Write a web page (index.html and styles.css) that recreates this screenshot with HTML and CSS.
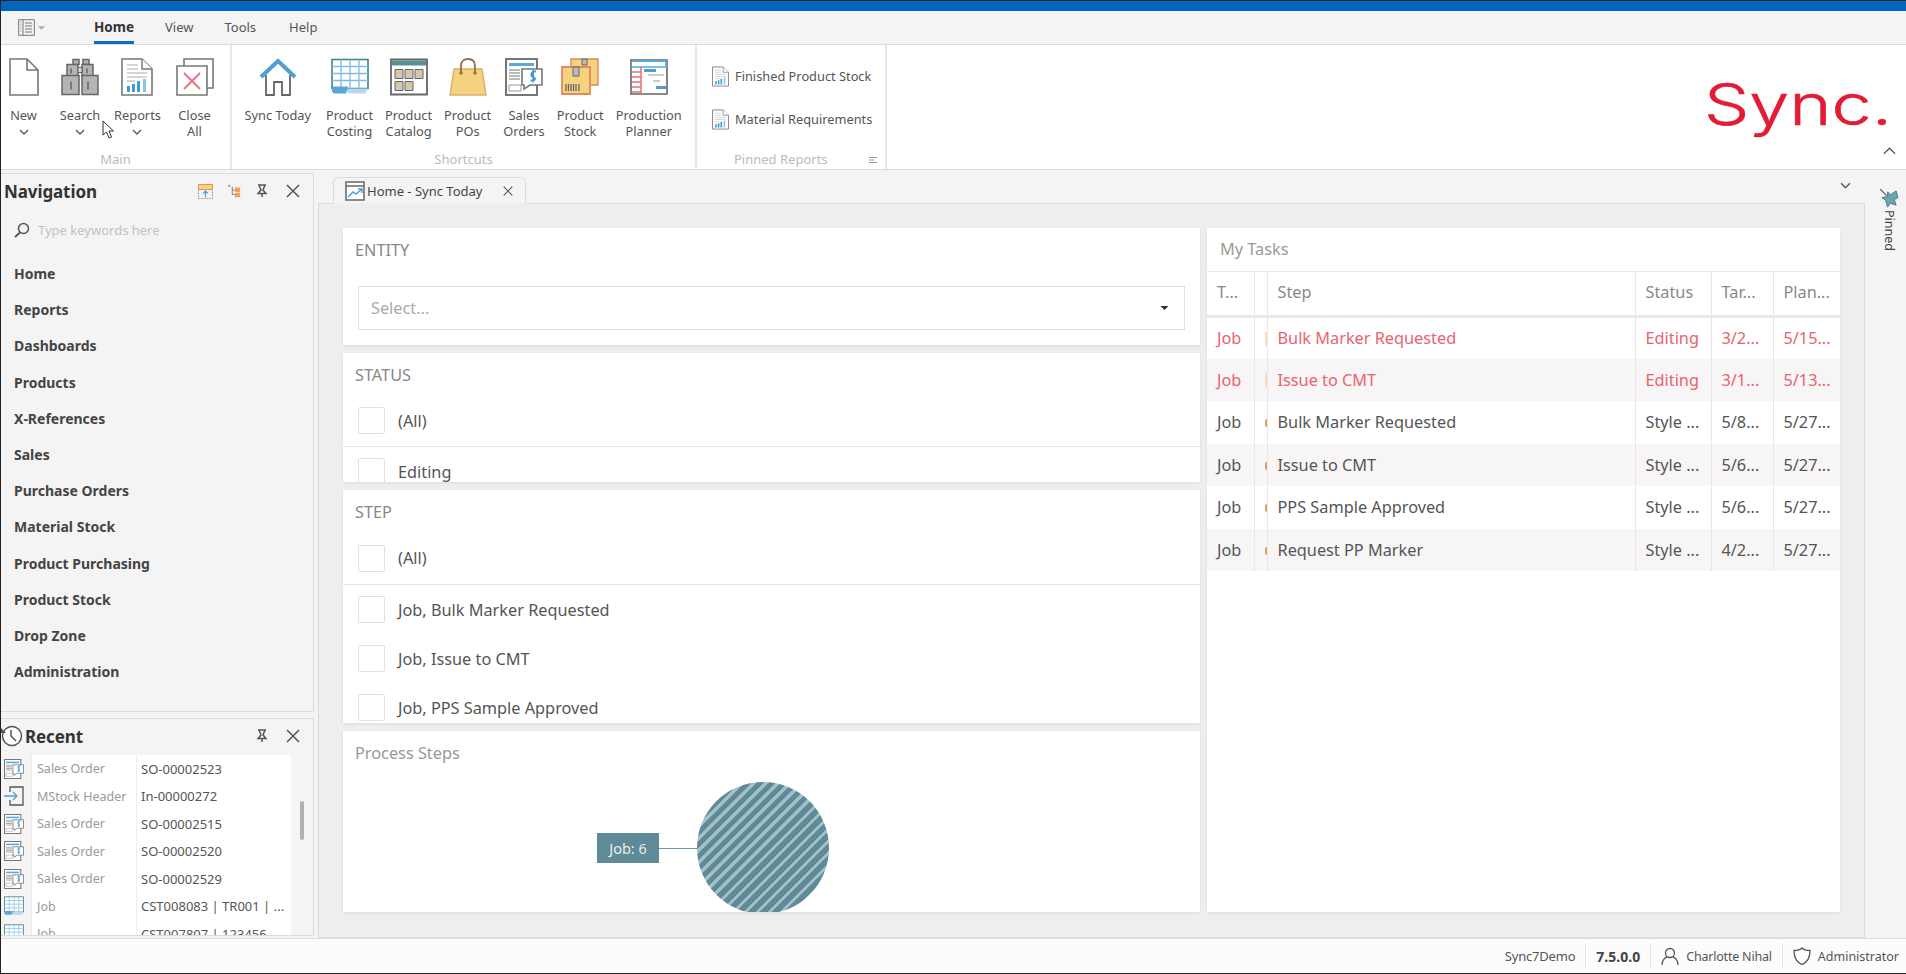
FILE: index.html
```html
<!DOCTYPE html>
<html lang="en">
<head>
<meta charset="utf-8">
<title>Sync - Home</title>
<link rel="stylesheet" href="styles.css">
</head>
<body>
<svg class="sprite" xmlns="http://www.w3.org/2000/svg">
  <symbol id="i-report" viewBox="0 0 32 38">
    <path d="M1 1H21L31 11V37H1Z" fill="#fff" stroke="#777" stroke-width="1.6"/><path d="M21 1V11H31" fill="#fff" stroke="#777" stroke-width="1.4"/>
    <path d="M6 7H17M6 11H17M6 15H26M6 19H26M6 23H14" stroke="#c8c8c8" stroke-width="1.4"/>
    <path d="M6 28h3v6H6zM11 26h3v8h-3zM16 23h3v11h-3z" fill="#3f9bd6"/><path d="M22 21h3v13h-3z" fill="#8bc2e6"/>
  </symbol>
  <symbol id="i-sales" viewBox="0 0 38 38">
    <path d="M1 1H32V37H1Z" fill="#fff" stroke="#777" stroke-width="2"/>
    <path d="M4 5H29V8H4Z" fill="#58aadd"/><path d="M4 12H15M4 15H15M4 18H15M4 21H15" stroke="#777" stroke-width="1.2"/>
    <path d="M4 27H16V33H4Z" fill="#fff" stroke="#999"/>
    <path d="M19 11H37V27H25L19 31V27H17V11Z" fill="#fff" stroke="#777" stroke-width="1.6"/>
    <path d="M31 13.500C26 13 25 18 28 19S31 23 25.500 22.500M28.200 12V24.500" fill="none" stroke="#3f9bd6" stroke-width="1.800"/>
  </symbol>
  <symbol id="i-grid" viewBox="0 0 38 37">
    <path d="M1 1H37V30H1Z" fill="#fff" stroke="#3f7f8c" stroke-width="1.6"/>
    <path d="M1 8H37M1 15H37M1 22H37M10 1V30M19 1V30M28 1V30" stroke="#7fbbe2" stroke-width="1.3"/>
    <path d="M1 30H37L34 35H18L16 33H2Z" fill="#b7d8ef"/><path d="M1 28H17L15 35H3L1 33Z" fill="#5aa6d8"/>
  </symbol>
  <symbol id="i-pin" viewBox="0 0 14 14">
    <path d="M3 1H11M4 1L6 6 3 9.500H11L8 6 10 1M7 9.500V13" fill="none" stroke="#555" stroke-width="1.500"/>
  </symbol>
  <symbol id="i-close" viewBox="0 0 14 14">
    <path d="M1 1L13 13M13 1L1 13" stroke="#555" stroke-width="1.500"/>
  </symbol>
  <symbol id="i-chev" viewBox="0 0 10 6">
    <path d="M1 1L5 5 9 1" fill="none" stroke="#555" stroke-width="1.300"/>
  </symbol>
</svg>

<div class="app">
  <div class="titlebar"></div>

  <div class="menubar">
    <div class="appmenu">
      <svg class="appmenu-icon" viewBox="0 0 17 17"><path d="M.7.7H16.300V16.300H.7Z" fill="#f4f4f4" stroke="#777"/><path d="M5 .7V16.300" stroke="#777"/><path d="M7 4H14M7 7H14M7 10H14M7 13H14" stroke="#777"/><path d="M2 3H3.500M2 6H3.500M2 9H3.500M2 12H3.500" stroke="#aaa"/></svg>
      <svg class="appmenu-caret" viewBox="0 0 8 4"><path d="M0 0H8L4 4Z" fill="#aaa"/></svg>
    </div>
    <nav class="menutabs">
      <span class="menutab menutab-on">Home</span>
      <span class="menutab">View</span>
      <span class="menutab">Tools</span>
      <span class="menutab menutab-help">Help</span>
    </nav>
  </div>

  <div class="ribbon">
    <section class="rgroup rgroup-main">
      <div class="rbtns rbtns-main">
        <div class="rbtn">
          <svg class="ricon ricon-new" viewBox="0 0 30 38"><path d="M1 1H18L29 12V37H1Z" fill="#fff" stroke="#777" stroke-width="1.600"/><path d="M18 1V12H29" fill="none" stroke="#777" stroke-width="1.600"/></svg>
          <span class="rlabel">New</span><svg class="rchev" viewBox="0 0 10 6"><use href="#i-chev"/></svg>
        </div>
        <div class="rbtn">
          <svg class="ricon" viewBox="0 0 38 37"><g fill="#b4b4b4" stroke="#666" stroke-width="1.500"><path d="M12 1h6v5h-6zM22 1h6v5h-6z"/><path d="M6 6H17V18H6ZM21 6H32V18H21Z"/><path d="M1 17H18V36H1ZM21 17H37V36H21Z"/></g><path d="M17 9H21V14H17Z" fill="#d8d8d8" stroke="#666"/><path d="M10 10V15M26 10V15M10 23V31M27 23V31" stroke="#666" stroke-width="1.500"/></svg>
          <span class="rlabel">Search</span><svg class="rchev" viewBox="0 0 10 6"><use href="#i-chev"/></svg>
        </div>
        <div class="rbtn">
          <svg class="ricon"><use href="#i-report"/></svg>
          <span class="rlabel">Reports</span><svg class="rchev" viewBox="0 0 10 6"><use href="#i-chev"/></svg>
        </div>
        <div class="rbtn">
          <svg class="ricon" viewBox="0 0 38 38"><path d="M8 1H37V30H8Z" fill="#fff" stroke="#777" stroke-width="1.600"/><path d="M1 8H31V37H1Z" fill="#fff" stroke="#777" stroke-width="1.600"/><path d="M8 15L24 31M24 15L8 31" stroke="#e8727c" stroke-width="1.800"/></svg>
          <span class="rlabel">Close<br>All</span>
        </div>
      </div>
      <div class="rgroup-name">Main</div>
    </section>

    <section class="rgroup rgroup-short">
      <div class="rbtns rbtns-short">
        <div class="rbtn rbtn-today">
          <svg class="ricon" viewBox="0 0 38 38"><path d="M7 17V37H15V24H23V37H31V17" fill="#fff" stroke="#666" stroke-width="1.800"/><path d="M2 19L19 3 36 19" fill="none" stroke="#4f9fd3" stroke-width="4"/></svg>
          <span class="rlabel">Sync Today</span>
        </div>
        <div class="rbtn">
          <svg class="ricon"><use href="#i-grid"/></svg>
          <span class="rlabel">Product<br>Costing</span>
        </div>
        <div class="rbtn">
          <svg class="ricon" viewBox="0 0 38 37"><path d="M1 1H37V36H1Z" fill="#fff" stroke="#666" stroke-width="1.800"/><path d="M2 2H36V7H2Z" fill="#5c8f92"/><g fill="#c9c9c9" stroke="#666"><path d="M5 11h8v9H5zM15 11h8v9h-8zM25 11h8v9h-8zM5 23h8v9H5zM15 23h8v9h-8z"/></g><path d="M7 13h4v3H7zM17 13h4v3h-4zM27 13h4v3h-4zM7 25h4v3H7zM17 25h4v3h-4z" fill="#f0c860"/></svg>
          <span class="rlabel">Product<br>Catalog</span>
        </div>
        <div class="rbtn">
          <svg class="ricon" viewBox="0 0 38 38"><path d="M5 11H33L37 37H1Z" fill="#f5d27f" stroke="#dcae6c" stroke-width="1.400"/><path d="M12 14V8C12 3 15 1 19 1S26 3 26 8V14" fill="none" stroke="#9c6e48" stroke-width="1.800"/><circle cx="12" cy="15" r="1.800" fill="#9c6e48"/><circle cx="26" cy="15" r="1.800" fill="#9c6e48"/></svg>
          <span class="rlabel">Product<br>POs</span>
        </div>
        <div class="rbtn">
          <svg class="ricon"><use href="#i-sales"/></svg>
          <span class="rlabel">Sales<br>Orders</span>
        </div>
        <div class="rbtn">
          <svg class="ricon" viewBox="0 0 38 38"><path d="M10 1H37V27H28V10H10Z" fill="#f5d27f" stroke="#e08a5a" stroke-width="1.400"/><path d="M1 9H29V36H1Z" fill="#f5d27f" stroke="#e08a5a" stroke-width="1.800"/><path d="M12 9h6v9h-6zM21 1h5v6h-5z" fill="#bbb" stroke="#666"/><path d="M5 26V33M7.500 26V33M10 26V33M12.500 26V33M15 26V33M18 26V33" stroke="#666" stroke-width="1.300"/></svg>
          <span class="rlabel">Product<br>Stock</span>
        </div>
        <div class="rbtn">
          <svg class="ricon" viewBox="0 0 38 36"><path d="M1 1H37V35H1Z" fill="#fff" stroke="#666" stroke-width="1.600"/><path d="M2 2H36V7" fill="none" stroke="#58aadd" stroke-width="1.800"/><path d="M1 8H37" stroke="#58aadd" stroke-width="1.500"/><path d="M2 13H11M2 18H11M2 23H11M2 28H11M2 33H11" stroke="#ea6d78" stroke-width="1.500"/><path d="M11 8V35" stroke="#ea6d78" stroke-width="1.500"/><path d="M14 10H26V13H14ZM26 27H36V30H26ZM20 18H32" fill="#4f9fd3"/><path d="M18 16H34M23 22H30" stroke="#999"/></svg>
          <span class="rlabel">Production<br>Planner</span>
        </div>
      </div>
      <div class="rgroup-name">Shortcuts</div>
    </section>

    <section class="rgroup rgroup-pinned">
      <div class="pinned-list">
        <div class="pinned-item"><svg class="pinned-icon"><use href="#i-report"/></svg><span>Finished Product Stock</span></div>
        <div class="pinned-item"><svg class="pinned-icon"><use href="#i-report"/></svg><span>Material Requirements</span></div>
      </div>
      <div class="rgroup-name rgroup-name-pinned">Pinned Reports
        <svg class="launcher" viewBox="0 0 8 6"><path d="M0 .5H8M0 3H5M0 5.500H8" stroke="#999"/></svg>
      </div>
    </section>

    <div class="brand">
      <svg class="logo" viewBox="0 0 184 60"><text x="-2" y="53" textLength="188" lengthAdjust="spacingAndGlyphs" class="logo-text">Sync.</text></svg>
      <svg class="ribbon-collapse" viewBox="0 0 14 8"><path d="M1 7L7 1 13 7" fill="none" stroke="#555" stroke-width="1.300"/></svg>
    </div>
  </div>

  <div class="workspace">
    <aside class="side">
      <section class="panel panel-nav">
        <header class="panel-head">
          <h2 class="panel-title">Navigation</h2>
          <div class="panel-tools">
            <svg class="tool tool-wide" viewBox="0 0 16 16"><path d="M.5 .5H15.500V6H.5Z" fill="#f5d27f" stroke="#e08a5a"/><path d="M.5 6V15.500H15.500V6" fill="none" stroke="#999" stroke-dasharray="2 1"/><path d="M8 14V8M5.500 10L8 7.500 10.500 10" fill="none" stroke="#3f9bd6" stroke-width="1.300"/></svg>
            <svg class="tool tool-tree" viewBox="0 0 16 16"><path d="M1 1h3v2H1z" fill="#e08a5a"/><path d="M6 3V12H9M6 7H9" fill="none" stroke="#777"/><path d="M9 4h6v5H9zM9 10h6v5H9z" fill="#f0a060"/></svg>
            <svg class="tool tool-pin"><use href="#i-pin"/></svg>
            <svg class="tool tool-close"><use href="#i-close"/></svg>
          </div>
        </header>
        <div class="nav-search">
          <svg class="nav-search-icon" viewBox="0 0 16 16"><circle cx="9.500" cy="6.500" r="5" fill="none" stroke="#555" stroke-width="1.500"/><path d="M6 10.500L1 15" stroke="#555" stroke-width="1.800"/></svg>
          <span>Type keywords here</span>
        </div>
        <ul class="nav-list">
          <li>Home</li><li>Reports</li><li>Dashboards</li><li>Products</li><li>X-References</li><li>Sales</li><li>Purchase Orders</li><li>Material Stock</li><li>Product Purchasing</li><li>Product Stock</li><li>Drop Zone</li><li>Administration</li>
        </ul>
      </section>

      <section class="panel panel-recent">
        <header class="panel-head panel-head-recent">
          <svg class="recent-clock" viewBox="0 0 22 22"><circle cx="11" cy="11" r="9.500" fill="#fff" stroke="#555" stroke-width="1.500"/><path d="M10 5V11L15 16" fill="none" stroke="#555" stroke-width="1.500"/><path d="M0 3L5 8H0Z" fill="#555"/></svg>
          <h2 class="panel-title">Recent</h2>
          <div class="panel-tools">
            <svg class="tool tool-pin"><use href="#i-pin"/></svg>
            <svg class="tool tool-close"><use href="#i-close"/></svg>
          </div>
        </header>
        <div class="recent-body">
          <div class="recent-grid">
            <div class="rc-row"><span class="rc-ic"><svg class="rc-svg"><use href="#i-sales"/></svg></span><span class="rc-type">Sales Order</span><span class="rc-val">SO-00002523</span></div>
            <div class="rc-row"><span class="rc-ic"><svg class="rc-svg" viewBox="0 0 20 20"><path d="M6 6V1H19V19H6V14" fill="none" stroke="#555" stroke-width="1.300"/><path d="M0 10H13M9 6L13 10 9 14" fill="none" stroke="#4f9fd3" stroke-width="1.300"/></svg></span><span class="rc-type">MStock Header</span><span class="rc-val">In-00000272</span></div>
            <div class="rc-row"><span class="rc-ic"><svg class="rc-svg"><use href="#i-sales"/></svg></span><span class="rc-type">Sales Order</span><span class="rc-val">SO-00002515</span></div>
            <div class="rc-row"><span class="rc-ic"><svg class="rc-svg"><use href="#i-sales"/></svg></span><span class="rc-type">Sales Order</span><span class="rc-val">SO-00002520</span></div>
            <div class="rc-row"><span class="rc-ic"><svg class="rc-svg"><use href="#i-sales"/></svg></span><span class="rc-type">Sales Order</span><span class="rc-val">SO-00002529</span></div>
            <div class="rc-row"><span class="rc-ic"><svg class="rc-svg"><use href="#i-grid"/></svg></span><span class="rc-type">Job</span><span class="rc-val">CST008083 | TR001 | ...</span></div>
            <div class="rc-row"><span class="rc-ic"><svg class="rc-svg"><use href="#i-grid"/></svg></span><span class="rc-type">Job</span><span class="rc-val">CST007807 | 123456 ...</span></div>
          </div>
          <div class="recent-scroll"><div class="recent-thumb"></div></div>
        </div>
      </section>
    </aside>

    <main class="docs">
      <div class="doc-tabs">
        <div class="doc-tab">
          <svg class="doc-tab-icon" viewBox="0 0 20 20"><path d="M1 1H19V19H1Z" fill="#fff" stroke="#666" stroke-width="1.500"/><path d="M1 5H19" stroke="#666" stroke-width="1.500"/><path d="M3 16L8 11 11 13 17 8M13 8H17V12" fill="none" stroke="#4f9fd3" stroke-width="1.500"/></svg>
          <span class="doc-tab-text">Home - Sync Today</span>
          <svg class="doc-tab-close"><use href="#i-close"/></svg>
        </div>
        <svg class="doc-tabs-more" viewBox="0 0 10 6"><use href="#i-chev"/></svg>
      </div>
      <div class="doc-body">
        <div class="col-left">
          <section class="card card-entity">
            <h3 class="card-title">ENTITY</h3>
            <div class="select"><span>Select...</span><svg class="select-arrow" viewBox="0 0 8 4"><path d="M0 0H8L4 4Z" fill="#333"/></svg></div>
          </section>
          <section class="card card-status">
            <h3 class="card-title">STATUS</h3>
            <div class="check-row check-all"><span class="check"></span>(All)</div>
            <div class="check-row"><span class="check"></span>Editing</div>
          </section>
          <section class="card card-step">
            <h3 class="card-title">STEP</h3>
            <div class="check-row check-all"><span class="check"></span>(All)</div>
            <div class="check-row"><span class="check"></span>Job, Bulk Marker Requested</div>
            <div class="check-row"><span class="check"></span>Job, Issue to CMT</div>
            <div class="check-row"><span class="check"></span>Job, PPS Sample Approved</div>
          </section>
          <section class="card card-process">
            <h3 class="card-title card-title-soft">Process Steps</h3>
            <div class="chart">
              <span class="chart-label">Job: 6</span>
              <span class="chart-line"></span>
              <span class="chart-pie"></span>
            </div>
          </section>
        </div>

        <section class="card card-tasks">
          <h3 class="card-title card-title-soft tasks-title">My Tasks</h3>
          <table class="tasks">
            <colgroup><col class="c-type"><col class="c-flag"><col class="c-step"><col class="c-status"><col class="c-target"><col class="c-plan"></colgroup>
            <thead><tr><th>T...</th><th></th><th>Step</th><th>Status</th><th>Tar...</th><th>Plan...</th></tr></thead>
            <tbody>
              <tr class="late"><td>Job</td><td class="flag"><i class="flag-mark"></i></td><td>Bulk Marker Requested</td><td>Editing</td><td>3/2...</td><td>5/15...</td></tr>
              <tr class="late"><td>Job</td><td class="flag"><i class="flag-mark"></i></td><td>Issue to CMT</td><td>Editing</td><td>3/1...</td><td>5/13...</td></tr>
              <tr><td>Job</td><td class="flag"><i class="flag-mark flag-dark"></i></td><td>Bulk Marker Requested</td><td>Style ...</td><td>5/8...</td><td>5/27...</td></tr>
              <tr><td>Job</td><td class="flag"><i class="flag-mark flag-dark"></i></td><td>Issue to CMT</td><td>Style ...</td><td>5/6...</td><td>5/27...</td></tr>
              <tr><td>Job</td><td class="flag"><i class="flag-mark flag-dark"></i></td><td>PPS Sample Approved</td><td>Style ...</td><td>5/6...</td><td>5/27...</td></tr>
              <tr><td>Job</td><td class="flag"><i class="flag-mark flag-dark"></i></td><td>Request PP Marker</td><td>Style ...</td><td>4/2...</td><td>5/27...</td></tr>
            </tbody>
          </table>
        </section>
      </div>
    </main>

    <aside class="pinned-strip">
      <svg class="pinned-strip-icon" viewBox="0 0 20 20"><path d="M0 0L7 7" stroke="#555" stroke-width="1.300"/><path d="M8 3L11 6 17 2 19 9 15 11 17 17 11 15 8 19 6 12 2 9 8 8Z" fill="#6ea5ad" stroke="#3f7f8c"/></svg>
      <span class="pinned-strip-text">Pinned</span>
    </aside>
  </div>

  <footer class="statusbar">
    <span class="st-cell st-first">Sync7Demo</span>
    <span class="st-cell st-ver">7.5.0.0</span>
    <span class="st-cell"><svg class="st-icon" viewBox="0 0 18 18"><circle cx="9" cy="6" r="4.500" fill="none" stroke="#555" stroke-width="1.300"/><path d="M1 18C1 13 4 10.500 6 10M17 18C17 13 14 10.500 12 10" fill="none" stroke="#555" stroke-width="1.300"/></svg>Charlotte Nihal</span>
    <span class="st-cell st-last"><svg class="st-icon" viewBox="0 0 18 18"><path d="M9 1C11 3 14 3.500 17 3.500 17 10 15 15 9 17.500 3 15 1 10 1 3.500 4 3.500 7 3 9 1Z" fill="none" stroke="#555" stroke-width="1.300"/></svg>Administrator</span>
  </footer>

  <svg class="cursor" viewBox="0 0 12 19"><path d="M1 1V15L4.500 12 7 18 9.500 17 7 11H11.500Z" fill="#fff" stroke="#333"/></svg>
</div>
</body>
</html>
```
FILE: styles.css
```css
* { box-sizing: border-box; }
html, body { margin: 0; padding: 0; height: 100%; overflow: hidden; }
body { font-family: "Noto Sans", "Open Sans", sans-serif; color: #444; background: #f4f4f4; }
h2, h3, ul { margin: 0; padding: 0; font-weight: normal; }
li { list-style: none; }
.sprite { position: absolute; width: 0; height: 0; }

.app { position: relative; width: 1906px; height: 974px; display: flex; flex-direction: column; border-left: 1px solid #222; border-bottom: 1px solid #222; border-top: 1px solid #222; overflow: hidden; }
.titlebar { height: 10px; background: #0066bf; flex: none; }

.menubar { height: 34px; flex: none; display: flex; align-items: center; background: #f4f4f4; border-bottom: 1px solid #dcdcdc; }
.appmenu { width: 93px; padding-left: 17px; display: flex; align-items: center; gap: 3px; }
.appmenu-icon { width: 17px; height: 17px; }
.appmenu-caret { width: 7px; height: 4px; }
.menutabs { display: flex; gap: 31px; height: 100%; align-items: center; font-size: 13px; }
.menutab { color: #555; line-height: 32px; height: 33px; border-bottom: 3px solid transparent; padding-top: 0; }
.menutab-on { font-weight: 700; font-size: 13.500px; color: #333; border-bottom-color: #0f6cbd; }
.menutab-help { margin-left: 2px; }

.ribbon { height: 125px; flex: none; display: flex; background: #fff; border-bottom: 1px solid #dcdcdc; }
.rgroup { display: flex; flex-direction: column; border-right: 2px solid #e6e6e6; position: relative; }
.rgroup-main { width: 231px; }
.rgroup-short { width: 465px; }
.rgroup-pinned { width: 190px; }
.rbtns { flex: 1; display: flex; padding-top: 13px; }
.rbtns-main { display: grid; grid-template-columns: 45px 68px 47px 67px; justify-items: center; padding-left: 0; }
.rbtns-short { gap: 12px; padding-left: 12.500px; }
.rbtn { display: flex; flex-direction: column; align-items: center; font-size: 12.800px; line-height: 16px; color: #555; text-align: center; white-space: nowrap; }
.rbtn-today { margin-right: 3px; }
.ricon { width: 38px; height: 38px; flex: none; margin-bottom: 11px; }
.ricon-new { width: 30px; }
.rlabel { display: block; }
.rchev { width: 10px; height: 6px; margin-top: 6px; }
.rgroup-name { height: 22px; flex: none; font-size: 13px; line-height: 17px; color: #bbb; text-align: center; padding-top: 4px; }
.rgroup-name-pinned { text-align: left; padding-left: 37px; display: flex; align-items: flex-start; justify-content: space-between; padding-right: 8px; }
.launcher { width: 8px; height: 6px; margin-top: 6px; }
.pinned-list { flex: 1; display: flex; flex-direction: column; gap: 21px; padding: 20px 0 0 15px; }
.pinned-item { display: flex; align-items: center; gap: 6px; font-size: 12.800px; color: #555; height: 22px; white-space: nowrap; }
.pinned-icon { width: 17px; height: 21px; flex: none; }

.brand { flex: 1; position: relative; display: flex; justify-content: flex-end; }
.logo { width: 184px; height: 60px; margin: 27px 16px 0 0; overflow: visible; }
.logo-text { font-family: Inter, "Liberation Sans", sans-serif; font-size: 57px; font-weight: 300; fill: #e31b35; stroke: #e31b35; stroke-width: .6px; }
.ribbon-collapse { position: absolute; right: 10px; bottom: 14px; width: 13px; height: 8px; }

.workspace { flex: 1; min-height: 0; display: flex; background: #f4f4f4; }
.side { width: 313px; flex: none; display: flex; flex-direction: column; gap: 6px; padding-top: 3px; }
.panel { border-right: 1px solid #dcdcdc; border-bottom: 1px solid #dcdcdc; border-top: 1px solid #dcdcdc; background: #f4f4f4; }
.panel-nav { height: 539px; flex: none; }
.panel-recent { flex: 1; min-height: 0; margin-bottom: 2px; display: flex; flex-direction: column; }
.panel-head { height: 34px; display: flex; align-items: center; padding-left: 3px; }
.panel-head-recent { padding-left: 0; height: 36px; flex: none; padding-bottom: 2px; }
.panel-title { font-size: 17px; font-weight: 700; color: #333; letter-spacing: -.1px; }
.panel-tools { margin-left: auto; display: flex; align-items: center; gap: 14px; padding-right: 13px; }
.tool { width: 14px; height: 14px; }
.tool-wide { width: 15px; height: 15px; }
.tool-close { margin-left: 3px; }
.recent-clock { width: 22px; height: 22px; margin-right: 2px; }
.nav-search { height: 40px; display: flex; align-items: center; padding-left: 13px; gap: 8px; font-size: 13px; color: #c2c2c2; margin-top: 2px; }
.nav-search-icon { width: 16px; height: 16px; }
.nav-list { padding: 7px 0 0 13px; font-size: 14px; font-weight: 700; color: #444; }
.nav-list li { height: 36.200px; line-height: 34px; }

.recent-body { flex: 1; min-height: 0; display: flex; overflow: hidden; }
.recent-grid { width: 290px; background: #fff; flex: none; overflow: hidden; }
.rc-row { height: 27.500px; display: grid; grid-template-columns: 31px 105px 1fr; align-items: center; font-size: 13px; }
.rc-ic { background: #f4f4f4; height: 100%; display: flex; align-items: center; padding-left: 3px; border-right: 1px solid #eaeaea; }
.rc-svg { width: 20px; height: 20px; }
.rc-type { color: #9a9a9a; padding-left: 5px; height: 100%; line-height: 27px; border-right: 1px solid #eee; white-space: nowrap; font-size: 12.500px; }
.rc-val { color: #555; padding-left: 4px; white-space: nowrap; overflow: hidden; }
.recent-scroll { flex: 1; padding: 46px 0 0 9px; }
.recent-thumb { width: 4px; height: 39px; background: #b0b0b0; border-radius: 2px; }

.docs { flex: 1; min-width: 0; display: flex; flex-direction: column; padding-left: 4px; }
.doc-tabs { height: 34px; flex: none; padding: 7px 0 0 15px; display: flex; position: relative; border-bottom: 1px solid #dcdcdc; margin-bottom: -1px; }
.doc-tab { width: 193px; height: 27px; background: #f4f4f4; border: 1px solid #dcdcdc; border-bottom-color: #f0f0f0; border-radius: 6px 6px 0 0; display: flex; align-items: center; padding-left: 11px; font-size: 13px; color: #444; white-space: nowrap; }
.doc-tab-icon { width: 20px; height: 20px; flex: none; margin-right: 2px; }
.doc-tab-text { flex: 1; }
.doc-tab-close { width: 10px; height: 10px; margin-right: 12px; }
.doc-tabs-more { position: absolute; right: 14px; top: 12px; width: 11px; height: 7px; }
.doc-body { flex: 1; min-height: 0; background: #eeeeee; border: 1px solid #dcdcdc; padding: 24px 24px 25px 24px; display: grid; grid-template-columns: 857px 1fr; gap: 7px; }

.col-left { display: flex; flex-direction: column; gap: 8px; min-height: 0; }
.card { background: #fff; box-shadow: 0 1px 3px rgba(0,0,0,.08); overflow: hidden; }
.card-title { font-size: 16.300px; color: #888; height: 44px; line-height: 45px; padding-left: 12px; }
.card-title-soft { color: #999; }
.card-entity { height: 117px; flex: none; }
.card-status { height: 129px; flex: none; }
.card-step { height: 233px; flex: none; }
.card-process { flex: 1; min-height: 0; }
.select { margin: 14px 15px 0 15px; height: 44px; border: 1px solid #e2e2e2; display: flex; align-items: center; justify-content: space-between; padding: 0 15px 0 12px; font-size: 16.300px; color: #aaa; }
.select-arrow { width: 9px; height: 4px; }
.check-row { display: flex; align-items: center; height: 49px; padding-left: 15px; gap: 13px; font-size: 16.300px; color: #555; white-space: nowrap; }
.check-all { height: 52px; border-bottom: 1px solid #e6e6e6; margin-top: -2px; }
.card-step .check-all { height: 53px; }
.check { width: 27px; height: 27px; border: 1px solid #e2e2e2; border-radius: 2px; flex: none; background: #fff; }
.chart { height: 135px; position: relative; }
.chart-label { position: absolute; left: 254px; top: 58px; width: 62px; height: 30px; background: #5f8a97; color: #e8eeef; font-size: 14.500px; line-height: 30px; text-align: center; }
.chart-line { position: absolute; left: 316px; top: 73px; width: 40px; height: 1px; background: #6b98a5; }
.chart-pie { position: absolute; left: 354px; top: 7px; width: 132px; height: 132px; border-radius: 50%; background: repeating-linear-gradient(135deg, #5f8a97 0, #5f8a97 5.500px, #a4bfc6 5.500px, #a4bfc6 8.500px); }

.card-tasks { min-height: 0; }
.tasks-title { height: 43px; line-height: 43px; padding-left: 13px; }
.tasks { width: 100%; border-collapse: collapse; table-layout: fixed; font-size: 16.300px; }
.c-type { width: 47px; }
.c-flag { width: 13px; }
.c-status { width: 76px; }
.c-target { width: 62px; }
.c-plan { width: 67px; }
.tasks th { height: 44.500px; font-weight: normal; text-align: left; color: #888; padding: 0 0 3px 10px; border-top: 1px solid #e8e8e8; border-bottom: 3px solid #e8e8e8; border-left: 1px solid #e8e8e8; white-space: nowrap; }
.tasks td { height: 42.500px; padding: 0 0 0 10px; border-left: 1px solid #e8e8e8; white-space: nowrap; overflow: hidden; color: #555; }
.tasks th:first-child, .tasks td:first-child { border-left: 0; }
.tasks tbody tr:nth-child(even) { background: #f7f5f6; }
.tasks tr.late td { color: #e8636f; }
.tasks td.flag { padding: 0; position: relative; }
.flag-mark { position: absolute; right: 0; top: 14px; width: 2px; height: 14px; background: #f7e0b8; }
.flag-dark { background: #e0a060; width: 2px; height: 8px; top: 18px; border-radius: 2px 0 0 2px; }

.pinned-strip { width: 41px; flex: none; position: relative; }
.pinned-strip-icon { position: absolute; left: 15px; top: 19px; width: 19px; height: 19px; }
.pinned-strip-text { position: absolute; left: 16px; top: 40px; writing-mode: vertical-rl; font-size: 12.500px; color: #444; }

.statusbar { height: 35px; flex: none; background: #fcfcfc; border-top: 1px solid #dcdcdc; display: flex; justify-content: flex-end; align-items: center; font-size: 12.500px; color: #555; }
.st-cell { display: flex; align-items: center; gap: 7px; height: 26px; padding: 0 10px; border-left: 1px solid #e4e4e4; white-space: nowrap; letter-spacing: -.2px; }
.st-first { border-left: 0; font-size: 13px; }
.st-ver { font-weight: 700; color: #444; font-size: 14px; letter-spacing: 0; }
.st-last { padding-right: 7px; letter-spacing: 0; }
.st-icon { width: 18px; height: 18px; }

.cursor { position: absolute; left: 101px; top: 119px; width: 12px; height: 19px; }
```
